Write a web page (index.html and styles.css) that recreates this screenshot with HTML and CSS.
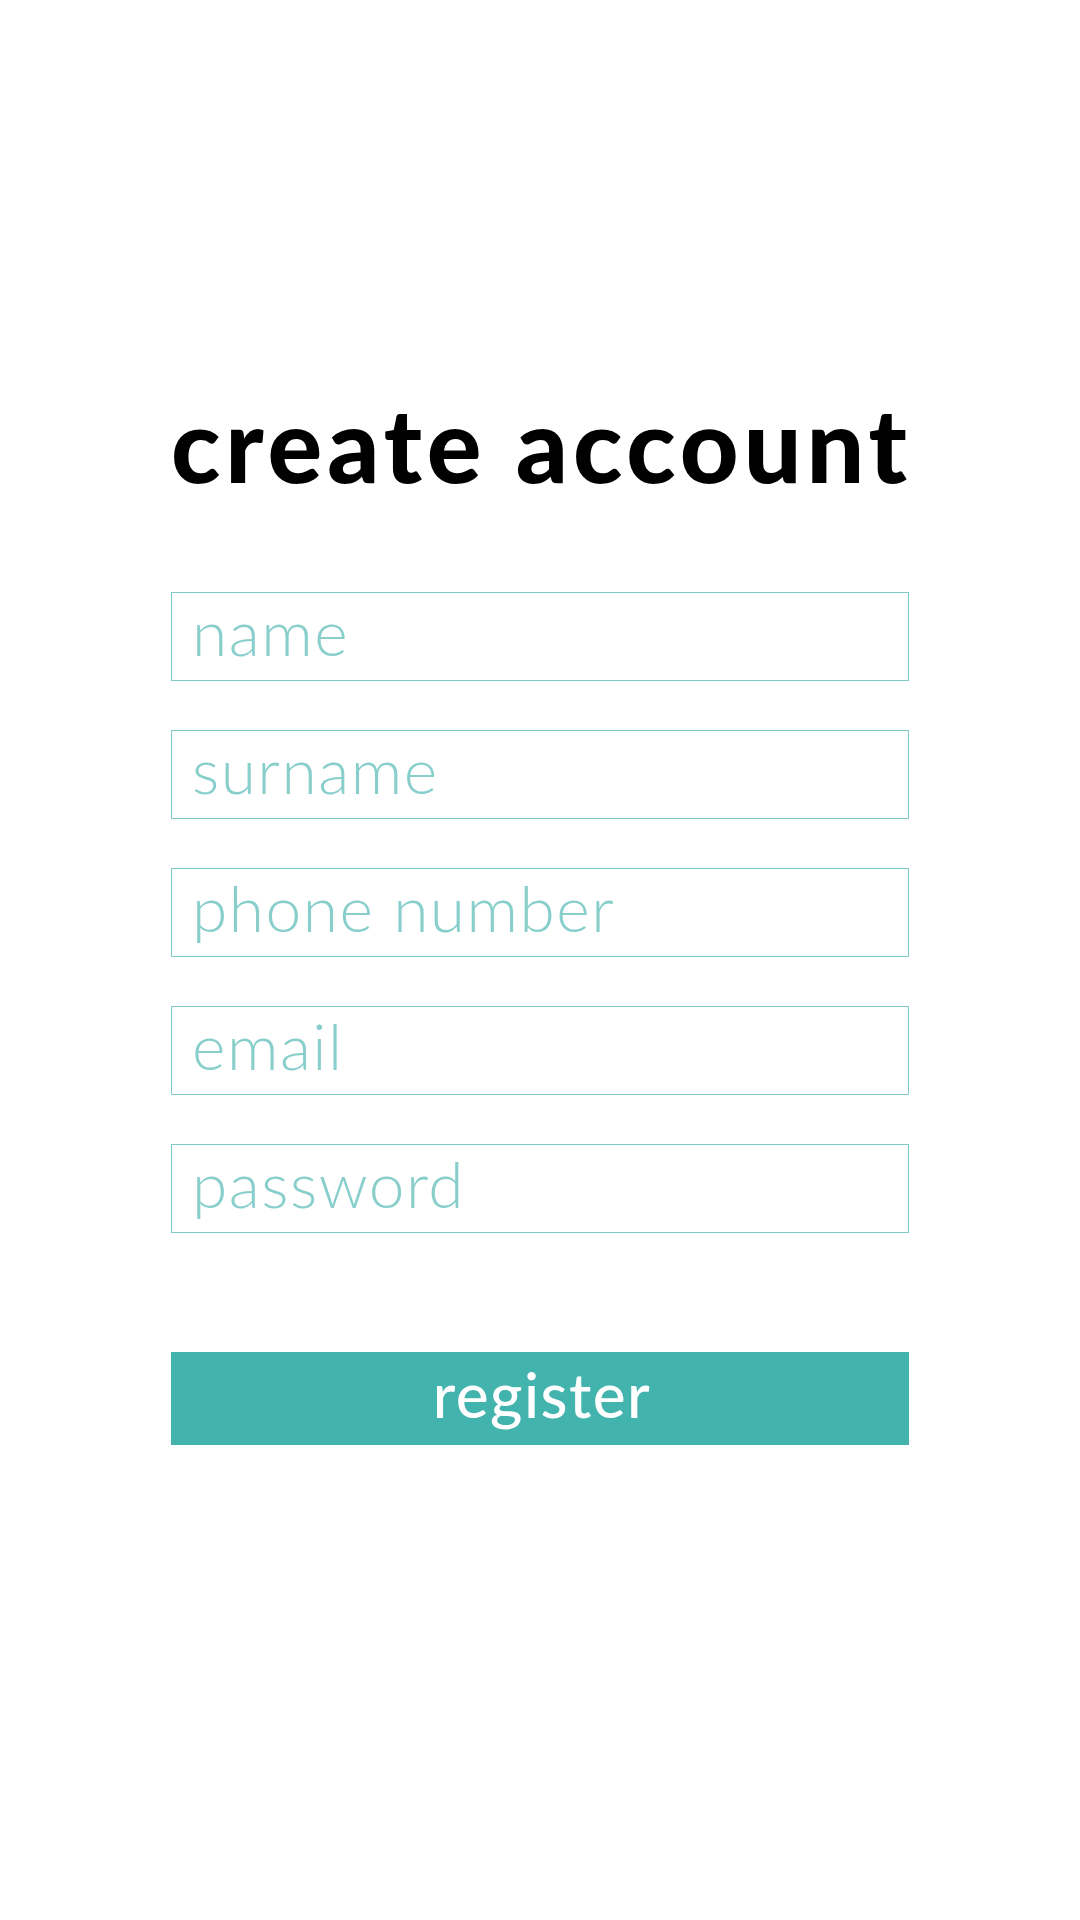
FILE: index.html
```html
<!DOCTYPE html>
<html lang="en">
<head>
<meta charset="utf-8">
<title>create account</title>
<link rel="stylesheet" href="styles.css">
</head>
<body>
<main class="page">
  <form class="card">
    <h1 class="title">create account</h1>
    <div class="fields">
      <input class="field" type="text" placeholder="name">
      <input class="field" type="text" placeholder="surname">
      <input class="field" type="tel" placeholder="phone number">
      <input class="field" type="email" placeholder="email">
      <input class="field" type="password" placeholder="password">
    </div>
    <button class="register" type="button">register</button>
  </form>
</main>
</body>
</html>
```

FILE: styles.css
```css
html, body {
  margin: 0;
  padding: 0;
  background: #ffffff;
}
.page {
  width: 1080px;
  height: 1920px;
  display: flex;
  justify-content: center;
}
.card {
  width: 738px;
  padding-top: 389px;
  display: flex;
  flex-direction: column;
}
.title {
  margin: 0;
  font-family: "Lato", sans-serif;
  font-weight: 900;
  font-size: 102px;
  line-height: 110px;
  letter-spacing: 5px;
  color: #000;
  text-align: center;
  white-space: nowrap;
}
.fields {
  margin-top: 93px;
  display: flex;
  flex-direction: column;
  gap: 49px;
}
.field {
  box-sizing: border-box;
  height: 89px;
  width: 738px;
  margin: 0;
  border: 1.5px solid #80cbc7;
  padding: 0 0 10px 20px;
  font-family: "Lato", sans-serif;
  font-weight: 300;
  font-size: 64px;
  letter-spacing: 1.5px;
  color: #88cfcc;
  background: #fff;
  outline: none;
}
.field::placeholder {
  color: #88cfcc;
  opacity: 1;
}
.register {
  margin-top: 119px;
  height: 93px;
  width: 738px;
  border: none;
  background: #43b3ae;
  color: #fff;
  font-family: "Lato", sans-serif;
  font-weight: 500;
  font-size: 62px;
  letter-spacing: 1.5px;
  line-height: 1;
  padding: 0 0 10px 4px;
}
```
